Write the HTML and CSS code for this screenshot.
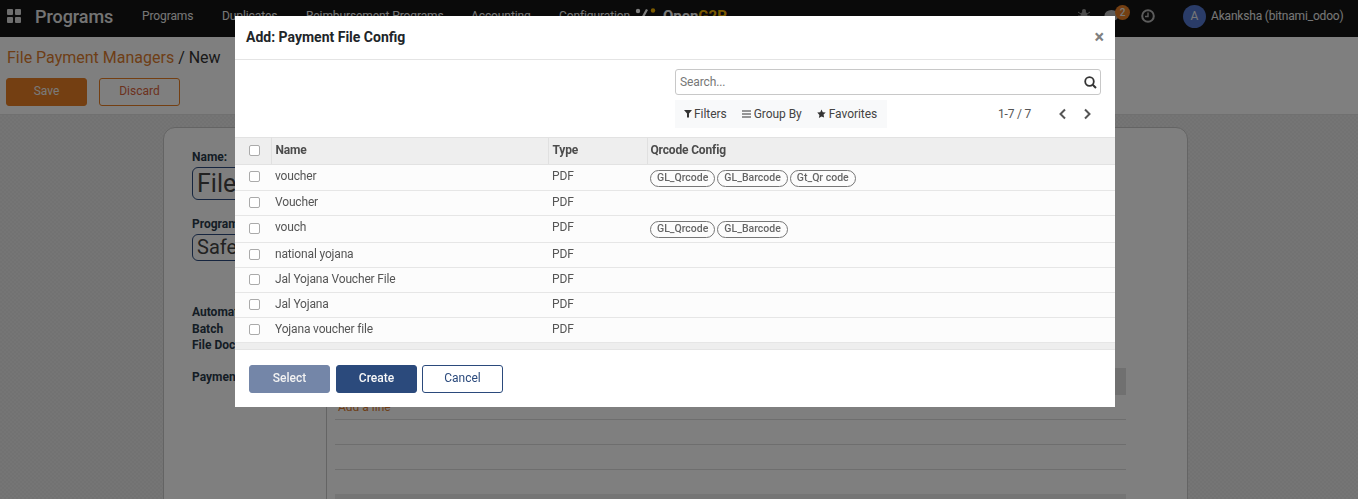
FILE: index.html
```html
<!DOCTYPE html>
<html lang="en">
<head>
<meta charset="utf-8">
<title>Add: Payment File Config</title>
<link rel="stylesheet" href="styles.css">
</head>
<body>
<div class="page">
  <header class="navbar">
    <svg class="apps" width="14" height="14" viewBox="0 0 14 14"><rect width="6" height="6" rx="1"/><rect x="8" width="6" height="6" rx="1"/><rect y="8" width="6" height="6" rx="1"/><rect x="8" y="8" width="6" height="6" rx="1"/></svg>
    <span class="brand">Programs</span>
    <nav class="menu">
      <span class="m1">Programs</span><span class="m2">Duplicates</span><span class="m3">Reimbursement Programs</span><span class="m4">Accounting</span><span class="m5">Configuration</span>
    </nav>
    <div class="logo">
      <svg width="24" height="16" viewBox="0 0 24 16"><circle cx="3" cy="3" r="2.200" fill="#fff"/><path d="M11 1 L13 2 L8 11 L6 10Z" fill="#fff"/><circle cx="18" cy="2.500" r="2.200" fill="#f5b301"/><path d="M9 10 C13 7 17 8 21 12 L19 13 C16 11 13 10 11 12Z" fill="#f5b301"/></svg>
      <span class="logo-a">Open</span><span class="logo-b">G2P</span>
    </div>
    <div class="systray">
      <svg class="bug" width="12" height="14" viewBox="0 0 12 14"><ellipse cx="6" cy="8" rx="3.400" ry="4.600"/><circle cx="6" cy="3" r="2"/><path d="M0 4l3 2M12 4L9 6M0 8h3M12 8H9M0 13l3-2M12 13l-3-2" stroke="#999" stroke-width="1" fill="none"/></svg>
      <span class="chat">
        <svg width="15" height="14" viewBox="0 0 15 14"><ellipse cx="7.500" cy="6.500" rx="7" ry="5.600"/><path d="M3 10l-1 4 5-2.500z"/></svg>
        <b class="badge">2</b>
      </span>
      <svg class="clock" width="14" height="14" viewBox="0 0 14 14"><circle cx="7" cy="7" r="5.800" fill="none" stroke="#b9b9b9" stroke-width="2"/><path d="M7 3.500V7.500H4" fill="none" stroke="#b9b9b9" stroke-width="1.400"/></svg>
      <span class="avatar">A</span>
      <span class="user">Akanksha (bitnami_odoo)</span>
    </div>
  </header>

  <section class="control">
    <div class="crumbs"><span class="crumb-link">File Payment Managers</span> / New</div>
    <div class="actions">
      <button class="btn btn-save">Save</button>
      <button class="btn btn-discard">Discard</button>
    </div>
  </section>

  <main class="content">
    <div class="sheet">
      <div class="form-left">
        <label class="lbl">Name:</label>
        <div class="input-big">File Payment</div>
        <label class="lbl lbl-program">Program</label>
        <div class="input-mid">Safety</div>
        <div class="lbl lbl-auto">Automation</div>
        <div class="lbl lbl-batch">Batch</div>
        <div class="lbl lbl-doc">File Document</div>
        <div class="lbl lbl-pay">Payment</div>
      </div>
      <div class="form-right">
        <div class="sub-head"></div>
        <div class="add-line">Add a line</div>
        <div class="sub-row"></div>
        <div class="sub-row"></div>
        <div class="sub-foot"></div>
      </div>
    </div>
  </main>
</div>

<div class="overlay"></div>

<div class="modal">
  <div class="modal-head">
    <h4>Add: Payment File Config</h4>
    <span class="close">×</span>
  </div>
  <div class="tools">
    <div class="search">
      <span>Search...</span>
      <svg width="13" height="13" viewBox="0 0 13 13"><circle cx="5.500" cy="5.500" r="4.300" fill="none" stroke="#333" stroke-width="1.800"/><path d="M8.700 8.700L12 12" stroke="#333" stroke-width="2"/></svg>
    </div>
    <div class="tools-row">
      <div class="filters">
        <span><svg width="8" height="9" viewBox="0 0 8 9"><path d="M0 1h8L5 4.500V8.500H3V4.500z" fill="#333"/></svg>Filters</span>
        <span><svg width="9" height="8" viewBox="0 0 9 8"><path d="M0 1h9M0 4h9M0 7h9" stroke="#333" stroke-width="1"/></svg>Group By</span>
        <span><svg width="9" height="9" viewBox="0 0 10 10"><path d="M5 .5l1.400 3 3.300.4-2.400 2.200.6 3.300L5 8.300 2.100 9.900l.6-3.300L.3 3.900l3.300-.4z" fill="#333"/></svg>Favorites</span>
      </div>
      <div class="pager">
        <span>1-7 / 7</span>
        <svg class="chev chev-prev" width="9" height="12" viewBox="0 0 9 12"><path d="M7 1.500L2.500 6 7 10.500" fill="none" stroke="#555" stroke-width="2"/></svg>
        <svg class="chev" width="9" height="12" viewBox="0 0 9 12"><path d="M2 1.500L6.500 6 2 10.500" fill="none" stroke="#555" stroke-width="2"/></svg>
      </div>
    </div>
  </div>
  <table class="list">
    <colgroup><col class="c0"><col class="c1"><col class="c2"><col></colgroup>
    <thead>
      <tr><th><i class="cb"></i></th><th>Name</th><th>Type</th><th class="th-qr">Qrcode Config</th></tr>
    </thead>
    <tbody>
      <tr class="r26"><td><i class="cb"></i></td><td>voucher</td><td>PDF</td><td class="tags"><span class="tag">GL_Qrcode</span><span class="tag">GL_Barcode</span><span class="tag">Gt_Qr code</span></td></tr>
      <tr class="r25"><td><i class="cb"></i></td><td>Voucher</td><td>PDF</td><td></td></tr>
      <tr class="r27"><td><i class="cb cb-low"></i></td><td>vouch</td><td>PDF</td><td class="tags"><span class="tag">GL_Qrcode</span><span class="tag">GL_Barcode</span></td></tr>
      <tr class="r25"><td><i class="cb"></i></td><td>national yojana</td><td>PDF</td><td></td></tr>
      <tr class="r25"><td><i class="cb"></i></td><td>Jal Yojana Voucher File</td><td>PDF</td><td></td></tr>
      <tr class="r25"><td><i class="cb"></i></td><td>Jal Yojana</td><td>PDF</td><td></td></tr>
      <tr class="r25"><td><i class="cb"></i></td><td>Yojana voucher file</td><td>PDF</td><td></td></tr>
    </tbody>
  </table>
  <div class="list-end"></div>
  <div class="modal-foot">
    <button class="mbtn mbtn-select">Select</button>
    <button class="mbtn mbtn-create">Create</button>
    <button class="mbtn mbtn-cancel">Cancel</button>
  </div>
</div>
</body>
</html>
```
FILE: styles.css
```css
* { box-sizing: border-box; }
html, body { margin: 0; height: 100%; overflow: hidden; }
body { font-family: Roboto, "Liberation Sans", sans-serif; font-size: 12px; color: #4c4c4c; background: #fff; }
button { font-family: inherit; }

.page { width: 1358px; height: 499px; overflow: hidden; display: flex; flex-direction: column; }

.navbar { flex: none; height: 37px; background: #141414; display: flex; align-items: center; color: #f0f0f0; padding: 0 0 5px 7px; }
.apps { fill: #ddd; flex: none; }
.brand { font-size: 18px; font-weight: 500; margin-left: 14px; width: 107px; color: #e8e8e8; letter-spacing: -.05px; }
.menu { display: flex; font-size: 12px; width: 493px; color: #eee; letter-spacing: -.1px; }
.m1 { width: 80px; } .m2 { width: 84px; } .m3 { width: 165px; } .m4 { width: 88px; }
.logo { display: flex; align-items: flex-start; width: 443px; height: 16px; font-size: 15px; font-weight: 700; line-height: 20px; margin-top: -5px; }
.logo svg { margin: 2px 4px 0 0; flex: none; }
.logo-a { color: #f0f0f0; }
.logo-b { color: #f5b301; }
.systray { display: flex; align-items: center; color: #eee; }
.bug { fill: #999; margin-top: -3px; }
.chat { position: relative; display: flex; margin-left: 14px; fill: #b9b9b9; }
.badge { position: absolute; left: 11px; top: -4px; width: 15px; height: 15px; border-radius: 50%; background: #e87f24; color: #eee; font-size: 10px; text-align: center; line-height: 15px; font-weight: 500; }
.clock { margin-left: 22px; }
.avatar { width: 23px; height: 23px; border-radius: 50%; background: #5478d0; margin-left: 28px; text-align: center; line-height: 23px; color: #eee; font-size: 12px; }
.user { margin-left: 5px; font-size: 12px; letter-spacing: -.18px; white-space: nowrap; }

.control { flex: none; height: 78px; background: #fff; border-bottom: 1px solid #e0e0e0; padding: 11px 6px 0; }
.crumbs { font-size: 16px; line-height: 20px; color: #333; padding-left: 1px; }
.crumb-link { color: #dd7d2e; }
.actions { display: flex; margin-top: 10px; }
.btn { width: 81px; height: 28px; border-radius: 3px; font-size: 12px; padding: 0 0 2px; }
.btn-save { background: #e87f24; border: 1px solid #e87f24; color: #f4f4f4; }
.btn-discard { background: #fff; border: 1px solid #e87f24; color: #d8643c; margin-left: 12px; }

.content { flex: 1; background-color: #ebebeb; background-image: conic-gradient(#e4e4e4 25%, transparent 0 50%, #e4e4e4 0 75%, transparent 0); background-size: 4px 4px; padding: 12px 170px 0 163px; }
.sheet { background: #fff; height: 400px; width: 1025px; border: 1px solid #c8c8c8; border-radius: 12px 12px 0 0; display: flex; }
.form-left { width: 162px; padding: 22px 0 0 28px; color: #222; flex: none; }
.lbl { display: block; font-weight: 700; font-size: 12px; line-height: 14px; color: #2a3a4a; white-space: nowrap; }
.input-big { width: 200px; height: 33px; margin-top: 3px; border: 1px solid #2c4a7e; border-radius: 6px; font-size: 25px; line-height: 31px; padding-left: 4px; color: #444; white-space: nowrap; }
.lbl-program { margin-top: 17px; }
.input-mid { width: 200px; height: 27px; margin-top: 3px; border: 1px solid #2c4a7e; border-radius: 6px; font-size: 20px; line-height: 25px; padding-left: 4px; color: #444; }
.lbl-auto { margin-top: 44px; }
.lbl-batch { margin-top: 3px; }
.lbl-doc { margin-top: 2px; }
.lbl-pay { margin-top: 18px; }
.form-right { flex: 1; border-left: 1px solid #c8c8c8; padding: 240px 0 0 8px; min-width: 0; }
.sub-head { height: 27px; width: 791px; background: #e0e0e0; }
.add-line { height: 25px; width: 791px; padding: 5px 0 0 3px; color: #dd7d2e; border-bottom: 1px solid #ddd; line-height: 14px; }
.sub-row { height: 25px; width: 791px; border-bottom: 1px solid #ddd; }
.sub-foot { height: 30px; width: 791px; margin-top: 24px; background: #eaeaea; }

.overlay { position: fixed; inset: 0; background: rgba(0, 0, 0, .5); }

.modal { position: absolute; left: 235px; top: 16px; width: 880px; height: 391px; background: #fff; display: flex; flex-direction: column; color: #4c4c4c; }
.modal-head { flex: none; height: 44px; border-bottom: 1px solid #e4e4e4; display: flex; align-items: center; justify-content: space-between; padding: 0 11px 2px; }
.modal-head h4 { margin: 0; font-size: 14px; font-weight: 700; color: #212529; }
.close { font-size: 18px; font-weight: 700; color: #808080; line-height: 18px; }
.tools { flex: none; height: 77px; padding: 9px 14px 0 440px; }
.search { height: 26px; border: 1px solid #c8c8c8; border-radius: 3px; display: flex; align-items: center; justify-content: space-between; padding: 0 3px 0 4px; color: #777; font-size: 12px; letter-spacing: -.12px; }
.tools-row { display: flex; margin-top: 5px; align-items: center; }
.filters { width: 212px; height: 28px; background: #f8f9fa; display: flex; align-items: center; padding: 0 0 1px 9px; gap: 15px; color: #444; font-size: 12px; letter-spacing: -.05px; }
.filters span { display: flex; align-items: center; gap: 3px; }
.filters span:first-child svg { margin-right: -1px; }
.pager { display: flex; align-items: center; margin-left: 111px; color: #555; font-size: 12px; white-space: nowrap; letter-spacing: -.2px; }
.chev { margin-left: 16px; }
.chev-prev { margin-left: 27px; }

.list { flex: none; width: 880px; border-collapse: collapse; table-layout: fixed; font-size: 12px; letter-spacing: -.16px; }
.c0 { width: 36px; } .c1 { width: 277px; } .c2 { width: 99px; }
.list th { height: 27px; background: #eee; border-top: 1px solid #e2e2e2; border-bottom: 1px solid #e2e2e2; text-align: left; font-weight: 700; padding: 0 0 2px 4px; color: #4c4c4c; }
.list th + th { border-left: 1px solid #e0e0e0; }
.list th:first-child { border-right: 1px solid #e0e0e0; padding-left: 14px; }
.list th.th-qr { padding-left: 3px; }
.list td { padding: 4px 0 0 4px; vertical-align: top; background: #fcfcfc; border-bottom: 1px solid #e6e6e6; line-height: 14px; color: #555; }
.list td:first-child { padding: 6px 0 0 14px; }
.r25 { height: 25px; } .r26 { height: 26px; } .r27 { height: 27px; }
.list td.tags { padding: 4px 0 3px 3px; line-height: 16px; letter-spacing: 0; }
.tag { display: inline-block; height: 17px; line-height: 14px; padding: 0 6px; border: 1px solid #777; border-radius: 9px; font-size: 10.5px; font-weight: 500; color: #666; margin-right: 2px; }
.cb { display: block; width: 11px; height: 11px; border: 1px solid #aaa; border-radius: 2px; background: #fff; }
.cb-low { margin-top: 1px; }
.list-end { flex: none; height: 7px; background: #eee; border-bottom: 1px solid #e4e4e4; margin-top: auto; }
.modal-foot { flex: none; height: 58px; display: flex; padding: 15px 0 0 14px; }
.mbtn { width: 81px; height: 28px; border-radius: 3px; font-size: 12px; padding: 0 0 2px; margin-right: 6px; }
.mbtn-select { background: #7486a8; border: 1px solid #7486a8; color: #f2f2f2; font-weight: 500; }
.mbtn-create { background: #2b4a7c; border: 1px solid #2b4a7c; color: #f8f8f8; font-weight: 500; margin-right: 5px; }
.mbtn-cancel { background: #fff; border: 1px solid #2b4a7c; color: #2b4a7c; }
```
